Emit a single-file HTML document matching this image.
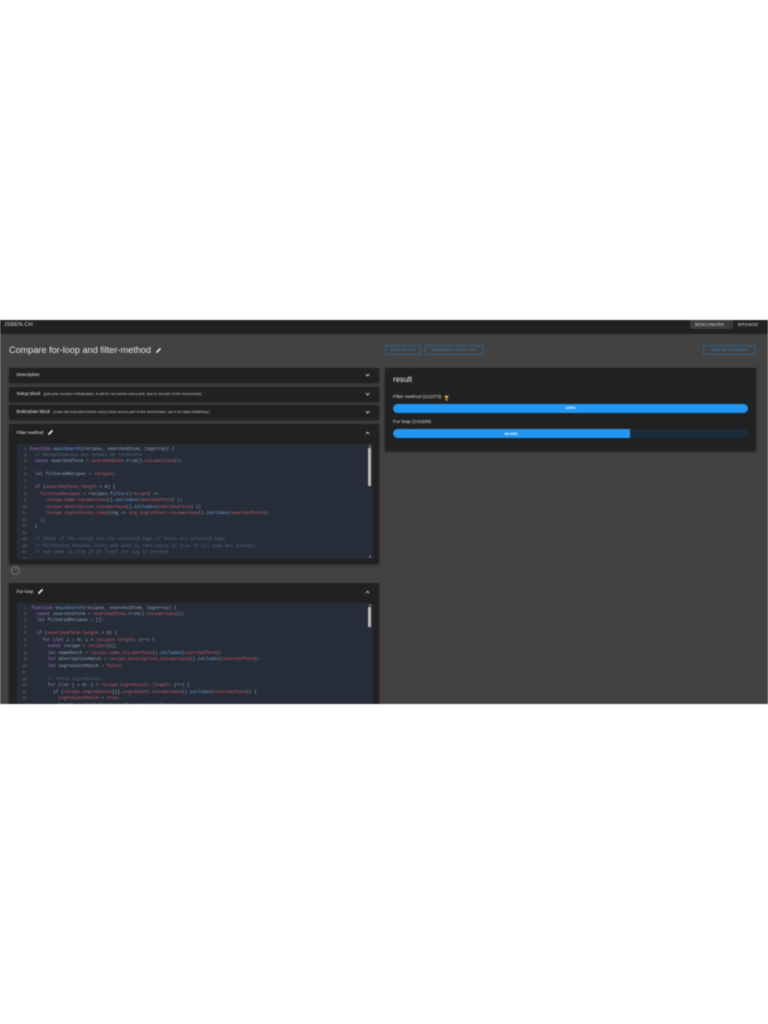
<!DOCTYPE html>
<html lang="en"><head><meta charset="utf-8"><title>JSBEN.CH</title>
<style>
html,body{margin:0;padding:0;background:#fff}
#p{position:relative;width:768px;height:1024px;overflow:hidden;background:#fff;font-family:"Liberation Sans",sans-serif;color:#eee}
#app{position:absolute;left:0;top:320px;width:768px;height:384px;background:#424242;overflow:hidden;filter:blur(.4px)}
.a{position:absolute;white-space:nowrap}
.panel{position:absolute;background:#212121;box-shadow:0 1px 3px rgba(0,0,0,.35)}
.t{position:absolute;left:8px;font-size:4.6px;color:#e8e8e8;white-space:nowrap}
.t small{font-size:3.75px;color:#c4c4c4;margin-left:3px}
.chev{position:absolute;right:9.5px;width:2.2px;height:2.2px;border-right:.7px solid #bbb;border-bottom:.7px solid #bbb;transform:rotate(45deg)}
.chev.up{transform:rotate(225deg)}
.btn{position:absolute;top:25px;height:10px;border:1px solid #2f5f86;box-sizing:border-box;border-radius:1px;color:#2d83c8;font-size:3.8px;line-height:8px;text-align:center;letter-spacing:.25px}
.code{position:absolute;left:8px;background:#272d38;overflow:hidden;font-family:"Liberation Mono",monospace;font-size:4.48px;line-height:6.48px;color:#a3a9b5}
.code pre{margin:0;position:absolute;left:13px;top:1px;font:inherit;line-height:inherit}
.nums{position:absolute;left:0;top:1px;width:10px;text-align:right;color:#778;font-size:3.8px;line-height:6.48px}
.sb{position:absolute;right:2px;width:2.5px;background:#b8b8b8}
.ar{position:absolute;right:2px;width:0;height:0;border-left:1.5px solid transparent;border-right:1.5px solid transparent}
.k{color:#b678d8}.f{color:#6aa4dc}.r{color:#cc5a68}.c{color:#5f6774}
.bar{position:absolute;left:8px;width:355px;height:9px;border-radius:5px;background:#1c2c3a;overflow:hidden}
.fill{position:absolute;left:0;top:0;height:100%;background:#2196f3;text-align:center;color:#fff;font-size:3.9px;line-height:9px;font-weight:bold}
</style></head><body><div id="p"><div id="app">
<div class="a" style="left:0;top:0;width:768px;height:14px;background:#212121"></div>
<div class="a" style="left:4px;top:1.5px;font-size:5.5px;color:#ddd;letter-spacing:.2px">JSBEN.CH</div>
<div class="a" style="left:690px;top:0;width:43px;height:9px;background:#3a3a3a"></div>
<div class="a" style="left:695px;top:1.5px;font-size:4.2px;color:#ddd;letter-spacing:.3px">BENCHMARK</div>
<div class="a" style="left:738px;top:1.5px;font-size:4.2px;color:#ddd;letter-spacing:.3px">BROWSE</div>

<div class="a" style="left:9px;top:25px;font-size:9.15px;color:#e4e4e4">Compare for-loop and filter-method</div>
<svg class="a" style="left:155px;top:27px" width="7" height="7" viewBox="0 0 7 7"><path d="M1 6l.4-1.6L5 .9l1.100 1.100L2.600 5.600z" fill="#e8e8e8"/></svg>

<div class="btn" style="left:385px;width:36px">RUN TESTS</div>
<div class="btn" style="left:424.500px;width:59px">GENERATE PAGE URL</div>
<div class="btn" style="left:703px;width:53px">NEW BENCHMARK</div>

<div class="panel" style="left:8.500px;top:48px;width:370.500px;height:15px"><div class="t" style="top:3.700px">Description</div><div class="chev" style="top:5px"></div></div>
<div class="panel" style="left:8.500px;top:67px;width:370.500px;height:15px"><div class="t" style="top:3.700px">Setup block<small>(just prior function initialization, it will be run before every test, and is not part of the benchmark)</small></div><div class="chev" style="top:5px"></div></div>
<div class="panel" style="left:8.500px;top:85px;width:370.500px;height:15px"><div class="t" style="top:3.700px">Boilerplate block<small>(code will executed before every block and is part of the benchmark, use it for data initializing.)</small></div><div class="chev" style="top:5px"></div></div>

<div class="panel" style="left:8.500px;top:104px;width:370.500px;height:140px">
<div class="t" style="top:6px">Filter method</div>
<svg class="a" style="left:38.500px;top:4.500px" width="7" height="7" viewBox="0 0 7 7"><path d="M1 6l.4-1.600L5 .9l1.100 1.100L2.600 5.600z" fill="#eee"/></svg>
<div class="chev up" style="top:8px"></div>
<div class="code" style="top:20px;width:356px;height:115px;left:8px">
<div class="nums" style="top:2.500px">1<br>2<br>3<br>4<br>5<br>6<br>7<br>8<br>9<br>10<br>11<br>12<br>13<br>14<br>15<br>16<br>17<br>18</div>
<pre style="left:13px;top:2.500px"><span class="k">function</span> <span class="f">mainSearch</span>(recipes, searchedItem, tagArray) {
  <span class="c">// Normalisation des termes de recherche</span>
  <span class="k">const</span> searchedTerm = <span class="r">searchedItem</span>.<span class="f">trim</span>().<span class="r">toLowerCase</span>();

  <span class="k">let</span> filteredRecipes = <span class="r">recipes</span>;

  <span class="k">if</span> (<span class="r">searchedTerm.length</span> &gt; 0) {
    <span class="r">filteredRecipes</span> = recipes.<span class="f">filter</span>((<span class="r">recipe</span>) =&gt;
      <span class="r">recipe.name.toLowerCase</span>().<span class="f">includes</span>(<span class="r">searchedTerm</span>) ||
      <span class="r">recipe.description.toLowerCase</span>().<span class="f">includes</span>(<span class="r">searchedTerm</span>) ||
      <span class="r">recipe.ingredients.some</span>(ing =&gt; <span class="r">ing.ingredient.toLowerCase</span>().<span class="f">includes</span>(<span class="r">searchedTerm</span>))
    );
  }

  <span class="c">// Check if the recipe has the selected tags if there are selected tags</span>
  <span class="c">// Difference between every and some is that every is true if all tags are present,</span>
  <span class="c">// and some is true if at least one tag is present</span></pre>
<div class="ar" style="top:1px;border-bottom:2px solid #bbb"></div>
<div class="sb" style="top:4px;height:38px"></div>
<div class="ar" style="bottom:1px;border-top:2px solid #bbb"></div>
</div></div>

<div class="a" style="left:11px;top:245.500px;width:9px;height:9px;border:.7px solid #777;border-radius:50%;box-sizing:border-box;color:#999;font-size:6px;line-height:7px;text-align:center">−</div>

<div class="panel" style="left:8.500px;top:263px;width:370.500px;height:125px">
<div class="t" style="top:6px">For loop</div>
<svg class="a" style="left:28px;top:4.500px" width="7" height="7" viewBox="0 0 7 7"><path d="M1 6l.4-1.600L5 .9l1.100 1.100L2.600 5.600z" fill="#eee"/></svg>
<div class="chev up" style="top:8px"></div>
<div class="code" style="top:20px;width:356px;height:105px;left:8px">
<div class="nums" style="top:2.500px">1<br>2<br>3<br>4<br>5<br>6<br>7<br>8<br>9<br>10<br>11<br>12<br>13<br>14<br>15<br>16</div>
<pre style="left:15px;top:2.500px"><span class="k">function</span> <span class="f">mainSearch</span>(recipes, searchedItem, tagArray) {
  <span class="k">const</span> searchedTerm = <span class="r">searchedItem</span>.<span class="f">trim</span>().<span class="r">toLowerCase</span>();
  <span class="k">let</span> filteredRecipes = [];

  <span class="k">if</span> (<span class="r">searchedTerm.length</span> &gt; 0) {
    <span class="k">for</span> (<span class="k">let</span> i = 0; i &lt; <span class="r">recipes.length</span>; i++) {
      <span class="k">const</span> recipe = <span class="r">recipes</span>[i];
      <span class="k">let</span> nameMatch = <span class="r">recipe.name.toLowerCase</span>().<span class="f">includes</span>(<span class="r">searchedTerm</span>);
      <span class="k">let</span> descriptionMatch = <span class="r">recipe.description.toLowerCase</span>().<span class="f">includes</span>(<span class="r">searchedTerm</span>);
      <span class="k">let</span> ingredientMatch = <span class="r">false</span>;

      <span class="c">// Check ingredients</span>
      <span class="k">for</span> (<span class="k">let</span> j = 0; j &lt; <span class="r">recipe.ingredients.length</span>; j++) {
        <span class="k">if</span> (<span class="r">recipe.ingredients</span>[j].<span class="r">ingredient.toLowerCase</span>().<span class="f">includes</span>(<span class="r">searchedTerm</span>)) {
          <span class="r">ingredientMatch</span> = <span class="r">true</span>;
          <span class="k">break</span>; <span class="c">// Exit the loop if a match is found</span></pre>
<div class="ar" style="top:1px;border-bottom:2px solid #bbb"></div>
<div class="sb" style="top:4px;height:20px"></div>
</div></div>

<div class="panel" style="left:385px;top:48px;width:370.500px;height:83px">
<div class="a" style="left:8px;top:7px;font-size:7.800px;color:#eee">result</div>
<div class="a" style="left:8px;top:27px;font-size:4.800px;color:#ddd">Filter method (212373)</div>
<svg class="a" style="left:59px;top:26.500px" width="5" height="6" viewBox="0 0 5 6"><path d="M.7.5h3.600v1.800L3 3.500V4.500h.8V5.500H1.200V4.500H2V3.500L.7 2.300z" fill="#d9a23a"/></svg>
<div class="bar" style="top:36px;height:8.500px"><div class="fill" style="width:100%;line-height:8.500px">100%</div></div>
<div class="a" style="left:8px;top:52px;font-size:4.800px;color:#ddd">For loop (141509)</div>
<div class="bar" style="top:60.500px"><div class="fill" style="width:66.630%;border-radius:5px 0 0 5px">66.63%</div></div>
</div>
</div></div></body></html>
